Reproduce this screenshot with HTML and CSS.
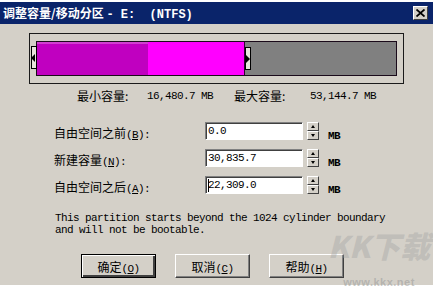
FILE: index.html
```html
<!DOCTYPE html>
<html lang="zh-CN">
<head>
    <meta charset="UTF-8">
    <title>调整容量/移动分区</title>
    <link rel="stylesheet" href="styles.css">
</head>
<body>
    <div class="dialog">
        <div class="titlebar">
            <span class="title">调整容量/移动分区 <span class="tmono">- E:  (NTFS)</span></span>
            <span class="close">
                <svg width="9" height="8" viewBox="0 0 9 8"><path d="M0.5 0.5 L8.5 7.5 M8.5 0.5 L0.5 7.5" stroke="#000" stroke-width="1.8"/></svg>
            </span>
        </div>

        <div class="content">
            <!-- partition map -->
            <div class="frame">
                <div class="bar">
                    <div class="seg used"></div>
                    <div class="seg grown"></div>
                    <div class="seg free"></div>
                </div>
                <span class="handle left"></span>
                <span class="handle right"></span>
            </div>

            <div class="limits">
                <span class="cn">最小容量:</span>
                <span class="mono">16,480.7 MB</span>
                <span class="cn">最大容量:</span>
                <span class="mono">53,144.7 MB</span>
            </div>

            <div class="fields">
                <div class="field">
                    <label class="cn">自由空间之前<span class="mono">(<u>B</u>):</span></label>
                    <div class="box mono">0.0</div>
                    <div class="arrows"><span class="up"></span><span class="down"></span></div>
                    <span class="unit mono">MB</span>
                </div>
                <div class="field">
                    <label class="cn">新建容量<span class="mono">(<u>N</u>):</span></label>
                    <div class="box mono">30,835.7</div>
                    <div class="arrows"><span class="up"></span><span class="down"></span></div>
                    <span class="unit mono">MB</span>
                </div>
                <div class="field">
                    <label class="cn">自由空间之后<span class="mono">(<u>A</u>):</span></label>
                    <div class="box mono"><span class="caret"></span>22,309.0</div>
                    <div class="arrows"><span class="up"></span><span class="down"></span></div>
                    <span class="unit mono">MB</span>
                </div>
            </div>

            <p class="note mono">This partition starts beyond the 1024 cylinder boundary<br>and will not be bootable.</p>

            <div class="buttons">
                <button class="btn default">确定<span class="mono">(<u>O</u>)</span></button>
                <button class="btn">取消<span class="mono">(<u>C</u>)</span></button>
                <button class="btn">帮助<span class="mono">(<u>H</u>)</span></button>
            </div>
        </div>

        <div class="watermark">
            <span class="wm-big">KK下载</span>
            <span class="wm-url">www.kkx.net</span>
        </div>
    </div>
</body>
</html>
```

FILE: styles.css
```css
* {
    margin: 0;
    padding: 0;
    box-sizing: border-box;
}
body {
    background: #fff;
    width: 433px;
    height: 292px;
    overflow: hidden;
    padding-top: 2px;
}
.dialog {
    position: relative;
    width: 433px;
    height: 283px;
    background: #d4d0c8;
    font-family: "Noto Sans CJK SC", sans-serif;
    font-size: 12px;
    color: #000;
}
.titlebar {
    height: 22px;
    background: #0a246a;
    display: flex;
    align-items: center;
    justify-content: space-between;
    padding: 0 5px 0 3px;
}
.title {
    color: #fff;
    font-weight: bold;
    font-size: 12px;
    white-space: pre;
}
.tmono {
    font-family: "Liberation Mono", monospace;
    font-size: 12px;
}
.close {
    width: 15px;
    height: 14px;
    background: #d4d0c8;
    border: 1px solid;
    border-color: #fff #404040 #404040 #fff;
    display: flex;
    align-items: center;
    justify-content: center;
}
.content {
    padding-top: 9px;
}
.mono {
    font-family: "Liberation Mono", monospace;
    font-size: 11px;
    letter-spacing: -0.6px;
}

/* partition map */
.frame {
    position: relative;
    margin-left: 29px;
    width: 375px;
    height: 51px;
    border: 1px solid #1a1a1a;
    padding: 7px 0 0 6px;
}
.bar {
    width: 361px;
    height: 35px;
    border: 1px solid #1a0a1a;
    display: flex;
}
.seg {
    height: 100%;
}
.used {
    width: 111px;
    background: #c000c0;
    border-top: 2px solid #d040d0;
}
.grown {
    width: 97px;
    background: #ff00ff;
    border-right: 1px solid #300030;
}
.free {
    flex: 1;
    background: #808080;
}
.handle {
    position: absolute;
    width: 6px;
    height: 23px;
    background: #e8e4dc;
    border: 1px solid #000;
}
.handle::after {
    content: "";
    position: absolute;
    top: 7px;
    border-top: 4px solid transparent;
    border-bottom: 4px solid transparent;
}
.handle.left {
    left: 1px;
    top: 12px;
}
.handle.left::after {
    left: -1px;
    border-right: 4px solid #000;
}
.handle.right {
    left: 215px;
    top: 13px;
}
.handle.right::after {
    left: 0;
    border-left: 4px solid #000;
}

.limits {
    display: grid;
    grid-template-columns: 70px 87px 76px auto;
    align-items: center;
    margin-top: 5px;
    padding-left: 77px;
    height: 14px;
    line-height: 14px;
}

/* input rows */
.fields {
    margin-top: 19px;
    padding-left: 54px;
    display: flex;
    flex-direction: column;
    gap: 9px;
}
.field {
    display: flex;
    align-items: flex-end;
    height: 18px;
}
.field label {
    width: 151px;
    line-height: 14px;
    margin-bottom: -2px;
}
.box {
    width: 98px;
    height: 18px;
    background: #fff;
    border: 1px solid;
    border-color: #808080 #fff #fff #808080;
    box-shadow: inset 1px 1px 0 #404040;
    padding: 2px 0 0 2px;
    line-height: 13px;
    display: flex;
}
.caret {
    width: 1px;
    height: 13px;
    background: #000;
    margin-right: -1px;
}
.arrows {
    margin-left: 4px;
    width: 12px;
    height: 18px;
    display: flex;
    flex-direction: column;
}
.arrows span {
    position: relative;
    flex: 1;
    background: #d4d0c8;
    border: 1px solid;
    border-color: #fff #404040 #404040 #fff;
}
.arrows span::after {
    content: "";
    position: absolute;
    left: 3px;
    top: 2px;
    border-left: 2px solid transparent;
    border-right: 2px solid transparent;
}
.arrows .up::after {
    border-bottom: 3px solid #000;
}
.arrows .down::after {
    border-top: 3px solid #000;
}
.unit {
    margin-left: 9px;
    margin-bottom: -2px;
    font-weight: bold;
}

.note {
    margin-top: 18px;
    padding-left: 55px;
    line-height: 12px;
}

/* dialog buttons */
.buttons {
    margin-top: 18px;
    padding-left: 81px;
    display: flex;
    gap: 19px;
}
.btn {
    width: 75px;
    height: 24px;
    background: #d4d0c8;
    font-family: "Noto Sans CJK SC", sans-serif;
    font-size: 12px;
    border: 1px solid;
    border-color: #fff #404040 #404040 #fff;
    box-shadow: inset -1px -1px 0 #808080;
}
.btn.default {
    border: 1px solid #000;
    box-shadow: inset 1px 1px 0 #fff, inset -2px -2px 0 #404040, inset -1px -1px 0 #808080;
}

.watermark {
    position: absolute;
    left: 326px;
    top: 220px;
    width: 106px;
    display: flex;
    flex-direction: column;
    align-items: center;
    white-space: nowrap;
    pointer-events: none;
}
.wm-big {
    font-family: "Noto Sans CJK SC", sans-serif;
    font-weight: 900;
    font-style: italic;
    font-size: 30px;
    line-height: 46px;
    color: rgba(160, 160, 160, 0.4);
}
.wm-url {
    margin-top: 8px;
    font-family: "Liberation Sans", sans-serif;
    font-weight: bold;
    font-size: 11px;
    line-height: 12px;
    color: rgba(150, 150, 150, 0.5);
    letter-spacing: 0.5px;
}
```
